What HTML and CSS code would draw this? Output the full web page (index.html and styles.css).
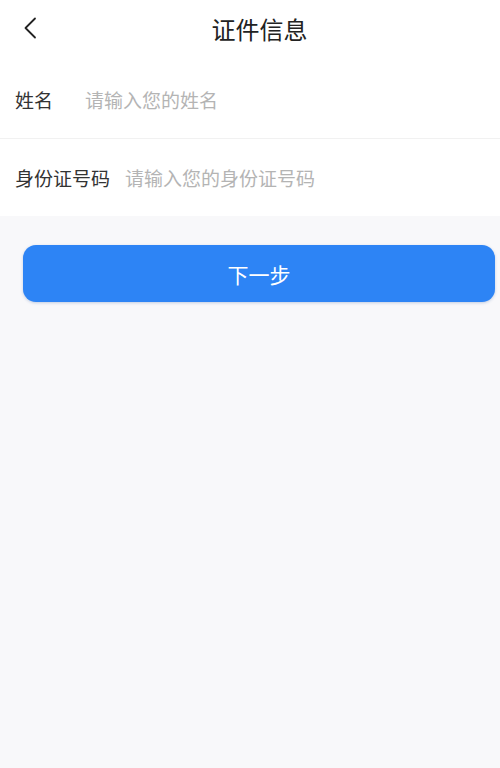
FILE: index.html
```html
<!DOCTYPE html>
<html lang="zh">
<head>
<meta charset="utf-8">
<link rel="stylesheet" href="styles.css">
</head>
<body>
<div class="page">
  <header class="nav">
    <span class="back">
      <svg width="14" height="22" viewBox="0 0 14 22"><path d="M12 1.5 L2.5 11 L12 20.5" fill="none" stroke="#222" stroke-width="1.8" stroke-linecap="round" stroke-linejoin="round"/></svg>
    </span>
    <h1 class="title">证件信息</h1>
  </header>
  <div class="form">
    <div class="row">
      <span class="label">姓名</span>
      <span class="ph">请输入您的姓名</span>
    </div>
    <div class="row">
      <span class="label">身份证号码</span>
      <span class="ph">请输入您的身份证号码</span>
    </div>
  </div>
  <div class="actions">
    <button class="btn">下一步</button>
  </div>
</div>
</body>
</html>
```
FILE: styles.css
```css
* { box-sizing: border-box; }
html, body { margin: 0; padding: 0; }
body {
  width: 500px;
  height: 768px;
  background: #f8f8fa;
  font-family: "Noto Sans CJK SC", "Noto Sans", sans-serif;
}
.page { display: flex; flex-direction: column; }
.nav {
  position: relative;
  height: 61px;
  background: #fff;
  display: flex;
  align-items: center;
  justify-content: center;
}
.back {
  position: absolute;
  left: 23px;
  top: 17px;
  display: flex;
}
.title {
  margin: 0;
  margin-top: -4px;
  margin-left: 19px;
  font-size: 24px;
  font-weight: 400;
  color: #222;
}
.form { background: #fff; }
.row {
  height: 77px;
  display: flex;
  align-items: center;
  padding-left: 15px;
  font-size: 19px;
}
.row + .row { border-top: 1px solid #f1f1f1; height: 78px; padding-bottom: 1px; }
.label { min-width: 55px; margin-right: 15px; color: #333; }
.ph { color: #b4b4b4; }
.actions { padding: 29px 5px 0 23px; }
.btn {
  width: 472px;
  height: 57px;
  border: none;
  border-radius: 13px;
  background: #2d84f5;
  color: #fff;
  font-family: inherit;
  font-size: 21px;
  box-shadow: 0 1px 3px rgba(30, 80, 160, 0.25);
  padding: 1px 0 0 0;
}
```
